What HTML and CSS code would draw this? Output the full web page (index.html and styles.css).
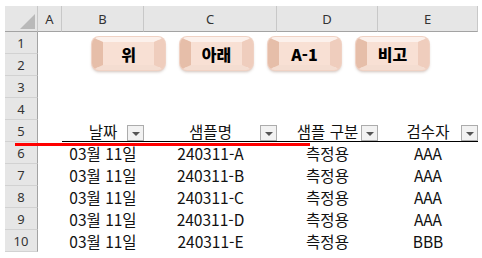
FILE: index.html
```html
<!DOCTYPE html>
<html lang="ko">
<head>
    <meta charset="UTF-8">
    <meta name="viewport" content="width=device-width, initial-scale=1.0">
    <title>샘플 목록</title>
    <link rel="stylesheet" href="styles.css">
</head>
<body>
    <div class="sheet">
        <div class="side">
            <div class="corner">
                <svg width="33" height="26" viewBox="0 0 33 26"><polygon points="30,8 30,23 15,23" fill="#b9b9b9"/></svg>
            </div>
            <div class="rn">1</div>
            <div class="rn">2</div>
            <div class="rn">3</div>
            <div class="rn">4</div>
            <div class="rn">5</div>
            <div class="rn">6</div>
            <div class="rn">7</div>
            <div class="rn">8</div>
            <div class="rn">9</div>
            <div class="rn">10</div>
        </div>

        <div class="main">
            <div class="cols">
                <div class="ch">A</div>
                <div class="ch">B</div>
                <div class="ch">C</div>
                <div class="ch">D</div>
                <div class="ch">E</div>
            </div>

            <div class="buttons">
                <button class="btn">위</button>
                <button class="btn">아래</button>
                <button class="btn">A-1</button>
                <button class="btn">비고</button>
            </div>
            <div class="spacer"></div>

            <div class="row head">
                <div class="cell"></div>
                <div class="cell hd">날짜<span class="filter"></span></div>
                <div class="cell hd">샘플명<span class="filter"></span></div>
                <div class="cell hd">샘플 구분<span class="filter"></span></div>
                <div class="cell hd">검수자<span class="filter"></span></div>
            </div>
            <div class="row">
                <div class="cell"></div>
                <div class="cell">03월 11일</div>
                <div class="cell">240311-A</div>
                <div class="cell">측정용</div>
                <div class="cell">AAA</div>
            </div>
            <div class="row">
                <div class="cell"></div>
                <div class="cell">03월 11일</div>
                <div class="cell">240311-B</div>
                <div class="cell">측정용</div>
                <div class="cell">AAA</div>
            </div>
            <div class="row">
                <div class="cell"></div>
                <div class="cell">03월 11일</div>
                <div class="cell">240311-C</div>
                <div class="cell">측정용</div>
                <div class="cell">AAA</div>
            </div>
            <div class="row">
                <div class="cell"></div>
                <div class="cell">03월 11일</div>
                <div class="cell">240311-D</div>
                <div class="cell">측정용</div>
                <div class="cell">AAA</div>
            </div>
            <div class="row">
                <div class="cell"></div>
                <div class="cell">03월 11일</div>
                <div class="cell">240311-E</div>
                <div class="cell">측정용</div>
                <div class="cell">BBB</div>
            </div>
        </div>

        <div class="redline"></div>
    </div>
</body>
</html>
```

FILE: styles.css
```css
body {
    margin: 0;
    background-color: #fff;
    font-family: "Noto Sans CJK KR", "Noto Sans", sans-serif;
    color: #111;
}
.sheet {
    position: relative;
    display: flex;
    margin: 6px 0 0 5px;
}
.side {
    display: flex;
    flex-direction: column;
    width: 33px;
}
.corner {
    height: 26px;
    background-color: #e6e6e6;
    border-bottom: 1px solid #a3a3a3;
    border-right: 1px solid #c8c8c8;
    box-sizing: border-box;
}
.corner svg {
    display: block;
}
.rn {
    height: 22px;
    background-color: #e6e6e6;
    border-bottom: 1px solid #d2d2d2;
    border-right: 1px solid #a3a3a3;
    box-sizing: border-box;
    font-family: "Noto Sans", sans-serif;
    font-size: 13px;
    color: #333;
    display: flex;
    align-items: center;
    justify-content: center;
}
.main {
    display: flex;
    flex-direction: column;
}
.cols, .row {
    display: grid;
    grid-template-columns: 24px 82px 133px 101px 100px;
}
.ch {
    height: 26px;
    background-color: #e6e6e6;
    border-bottom: 1px solid #a3a3a3;
    border-right: 1px solid #c8c8c8;
    box-sizing: border-box;
    font-family: "Noto Sans", sans-serif;
    font-size: 13px;
    color: #333;
    display: flex;
    align-items: center;
    justify-content: center;
}
.buttons {
    height: 44px;
    box-sizing: border-box;
    padding: 5px 0 0 54px;
    display: flex;
    gap: 15px;
}
.btn {
    width: 73px;
    height: 33px;
    box-sizing: border-box;
    border-style: solid;
    border-width: 5px 11px 5px 11px;
    border-color: #fcf1ec #efcdbd #f4ddd1 #e6bea9;
    border-radius: 7px;
    background-color: #f8e0d4;
    box-shadow: 0 0 0 1px #f0d2c4, 0 2px 3px rgba(120, 80, 60, 0.35);
    font-family: "Noto Sans CJK KR", sans-serif;
    font-weight: 900;
    font-size: 16px;
    color: #000;
    padding: 0;
    line-height: 1;
}
.spacer {
    height: 44px;
}
.cell {
    height: 22px;
    position: relative;
    display: flex;
    align-items: center;
    justify-content: center;
    font-size: 15.5px;
    white-space: nowrap;
}
.head .cell {
    box-sizing: border-box;
}
.head .hd {
    border-bottom: 1px solid #000;
}
.filter {
    position: absolute;
    right: 0;
    bottom: 0;
    width: 17px;
    height: 16px;
    box-sizing: border-box;
    border: 1px solid #acacac;
    background-color: #f2f2f2;
}
.filter::after {
    content: "";
    position: absolute;
    left: 4px;
    top: 6px;
    border-left: 4px solid transparent;
    border-right: 4px solid transparent;
    border-top: 4px solid #555;
}
.redline {
    position: absolute;
    left: 10px;
    top: 137px;
    width: 295px;
    height: 3px;
    background-color: #f00;
}
```
